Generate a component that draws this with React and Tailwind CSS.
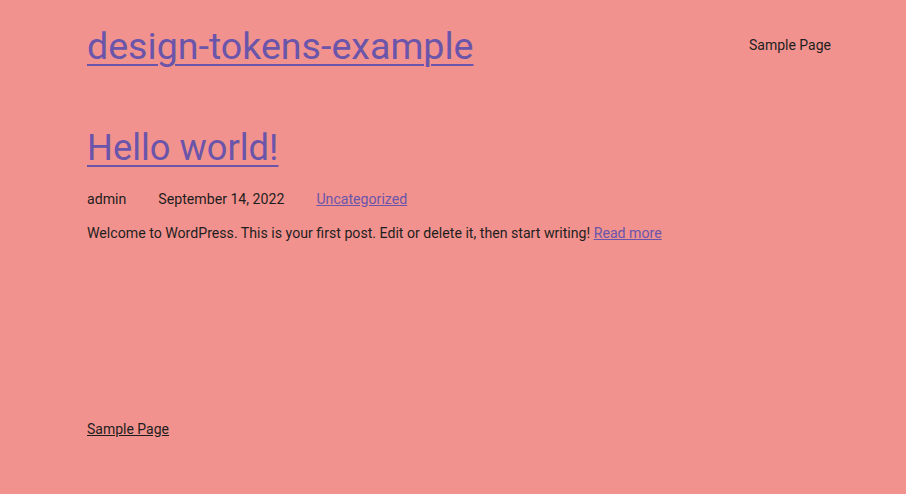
import React from "react";

export default function App() {
  return (
    <div className="min-h-[494px] bg-[#f2928e] font-['Roboto',sans-serif] text-[#1e1e1e] flex flex-col">
      <header className="flex items-start justify-between pl-[87px] pr-[75px] pt-[23px]">
        <a href="#" className="text-[37.6px] leading-[46px] text-[#6a55aa] underline underline-offset-[5px] decoration-[2px]">
          design-tokens-example
        </a>
        <nav className="pt-[12px] text-[14px] leading-[20px]">
          <a href="#">Sample Page</a>
        </nav>
      </header>

      <main className="pl-[87px] pt-[56px]">
        <h2 className="text-[36.3px] leading-[46px] text-[#6a55aa]">
          <a href="#" className="underline underline-offset-[5px] decoration-[2px]">Hello world!</a>
        </h2>
        <div className="mt-[18px] flex gap-[32px] text-[14.15px] leading-[20px]">
          <span>admin</span>
          <span>September 14, 2022</span>
          <a href="#" className="text-[#6a55aa] underline">Uncategorized</a>
        </div>
        <p className="mt-[14px] text-[14.15px] leading-[20px]">
          Welcome to WordPress. This is your first post. Edit or delete it, then start writing!{" "}
          <a href="#" className="text-[#6a55aa] underline">Read more</a>
        </p>
      </main>

      <footer className="pl-[87px] pt-[176px] text-[14px] leading-[20px]">
        <a href="#" className="underline">Sample Page</a>
      </footer>
    </div>
  );
}
